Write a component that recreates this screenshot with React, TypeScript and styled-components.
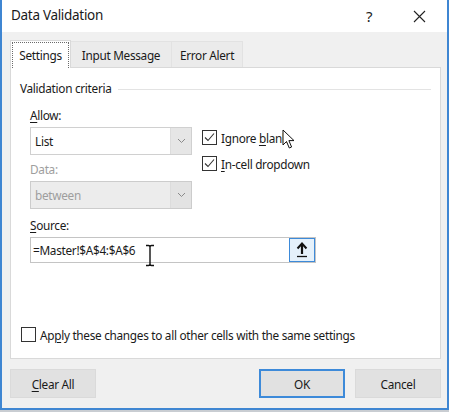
import React from 'react'
import styled, { createGlobalStyle } from 'styled-components'

const GlobalStyle = createGlobalStyle`
  html, body {
    margin: 0;
    padding: 0;
    background: #c9cdd2;
  }
  body {
    font-family: 'Noto Sans', 'Open Sans', Arial, sans-serif;
    font-size: 11.8px;
    letter-spacing: -0.3px;
    color: #1a1a1a;
  }
`

const Window = styled.div`
  width: 449px;
  height: 410px;
  box-sizing: border-box;
  border: 2px solid #3f86d2;
  border-top: none;
  background: #f0f0f0;
  display: flex;
  flex-direction: column;
  overflow: hidden;
`

const TitleBar = styled.div`
  height: 32px;
  flex: 0 0 32px;
  background: #ffffff;
  display: flex;
  align-items: center;
  padding-left: 9px;
  padding-right: 3px;
`

const Title = styled.div`
  font-size: 13.5px;
  flex: 1;
  padding-bottom: 2px;
`

const TitleButton = styled.div`
  width: 50px;
  height: 32px;
  display: flex;
  align-items: center;
  justify-content: center;
  font-size: 15px;
  color: #222;
`

const Body = styled.div`
  flex: 1;
  display: flex;
  flex-direction: column;
  padding: 8px 6px 0 8px;
`

const TabStrip = styled.div`
  display: flex;
  align-items: flex-end;
  height: 27px;
`

const Tab = styled.div<{ $active?: boolean; $width: number }>`
  width: ${p => p.$width}px;
  height: ${p => (p.$active ? 28 : 26)}px;
  box-sizing: border-box;
  padding: 1px 1px 0;
  display: flex;
  align-items: stretch;
  justify-content: center;
  background: ${p => (p.$active ? '#ffffff' : '#ebebeb')};
  border: 1px solid ${p => (p.$active ? '#d9d9d9' : '#e2e2e2')};
  border-bottom: none;
  & + & {
    border-left: none;
  }
  position: relative;
  z-index: ${p => (p.$active ? 1 : 0)};
  margin-bottom: ${p => (p.$active ? -1 : 0)}px;
`

const TabLabel = styled.span<{ $focused?: boolean }>`
  flex: 1;
  display: flex;
  align-items: center;
  justify-content: center;
  padding-bottom: 1px;
  border: 1px dotted ${p => (p.$focused ? '#6a6a6a' : 'transparent')};
  border-bottom: none;
`

const Panel = styled.div`
  height: 292px;
  box-sizing: border-box;
  background: #ffffff;
  border: 1px solid #d9d9d9;
  padding: 12px 9px 12px 9px;
  display: flex;
  flex-direction: column;
`

const GroupHeader = styled.div`
  display: flex;
  align-items: center;
  gap: 6px;
  &::after {
    content: '';
    flex: 1;
    height: 1px;
    background: #e3e3e3;
    margin-top: 2px;
  }
`

const Form = styled.div`
  padding-left: 10px;
  margin-top: 10px;
  display: grid;
  grid-template-columns: 162px 1fr;
  column-gap: 10px;
`

const Label = styled.div<{ $disabled?: boolean }>`
  color: ${p => (p.$disabled ? '#9e9e9e' : '#1a1a1a')};
  height: 18px;
  line-height: 18px;
  margin-bottom: 3px;
`

const U = styled.span`
  text-decoration: underline;
  text-underline-offset: 2px;
`

const Select = styled.div<{ $disabled?: boolean }>`
  height: 28px;
  box-sizing: border-box;
  display: flex;
  align-items: stretch;
  border: 1px solid ${p => (p.$disabled ? '#cccccc' : '#d0d0d0')};
  background: ${p => (p.$disabled ? '#ececec' : '#ffffff')};
  color: ${p => (p.$disabled ? '#9e9e9e' : '#1a1a1a')};
  margin-bottom: 5px;
`

const SelectValue = styled.div`
  flex: 1;
  display: flex;
  align-items: center;
  padding-left: 4px;
`

const SelectArrow = styled.div<{ $disabled?: boolean }>`
  width: 20px;
  display: flex;
  align-items: center;
  justify-content: center;
  background: ${p => (p.$disabled ? '#e3e3e3' : '#e6e6e6')};
  border-left: 1px solid #dcdcdc;
`

const Column = styled.div`
  display: flex;
  flex-direction: column;
`

const Checks = styled.div`
  display: flex;
  flex-direction: column;
  gap: 9px;
  padding-top: 23px;
`

const CheckRow = styled.label`
  display: flex;
  align-items: center;
  gap: 4px;
  height: 17px;
  position: relative;
`

const Box = styled.span`
  width: 15px;
  height: 15px;
  flex: 0 0 15px;
  box-sizing: border-box;
  border: 1px solid #333;
  background: #fff;
  display: inline-flex;
  align-items: center;
  justify-content: center;
`

const SourceBlock = styled.div`
  padding-left: 10px;
  padding-top: 2px;
`

const SourceField = styled.div`
  width: 286px;
  height: 26px;
  box-sizing: border-box;
  border: 1px solid #c4c4c4;
  display: flex;
  align-items: center;
  padding-left: 2px;
  position: relative;
`

const SourceText = styled.div`
  flex: 1;
`

const RefButton = styled.div`
  width: 26px;
  height: 24px;
  box-sizing: border-box;
  background: #e5f1fb;
  border: 1px solid #3d8ad9;
  display: flex;
  align-items: center;
  justify-content: center;
`

const Spacer = styled.div`
  flex: 1;
`

const ApplyRow = styled(CheckRow)`
  padding-left: 1px;
  margin-bottom: 3px;
`

const ButtonRow = styled.div`
  display: flex;
  align-items: center;
  margin-top: 10px;
`

const Button = styled.div<{ $default?: boolean }>`
  width: 86px;
  height: 29px;
  box-sizing: border-box;
  background: #e1e1e1;
  border: ${p => (p.$default ? '2px solid #3d8ad9' : '1px solid #dadada')};
  display: flex;
  align-items: center;
  justify-content: center;
  & + & {
    margin-left: 10px;
  }
`

const Overlay = styled.svg`
  position: absolute;
  pointer-events: none;
`

const Check = () => (
  <svg width="13" height="13" viewBox="0 0 13 13">
    <path d="M2 6.5 L5 9.5 L11 2.5" fill="none" stroke="#333" strokeWidth="1.1" />
  </svg>
)

const Chevron = () => (
  <svg width="9" height="6" viewBox="0 0 9 6">
    <path d="M1 1 L4.5 4.5 L8 1" fill="none" stroke="#8a8a8a" strokeWidth="1" />
  </svg>
)

const App: React.FC = () => (
  <>
    <GlobalStyle />
    <Window>
      <TitleBar>
        <Title>Data Validation</Title>
        <TitleButton>?</TitleButton>
        <TitleButton>
          <svg width="13" height="13" viewBox="0 0 13 13">
            <path d="M1 1 L12 12 M12 1 L1 12" stroke="#222" strokeWidth="1.1" />
          </svg>
        </TitleButton>
      </TitleBar>
      <Body>
        <TabStrip>
          <Tab $active $width={61}>
            <TabLabel $focused>Settings</TabLabel>
          </Tab>
          <Tab $width={101}>
            <TabLabel>Input Message</TabLabel>
          </Tab>
          <Tab $width={71}>
            <TabLabel>Error Alert</TabLabel>
          </Tab>
        </TabStrip>
        <Panel>
          <GroupHeader>Validation criteria</GroupHeader>
          <Form>
            <Column>
              <Label>
                <U>A</U>llow:
              </Label>
              <Select>
                <SelectValue>List</SelectValue>
                <SelectArrow>
                  <Chevron />
                </SelectArrow>
              </Select>
              <Label $disabled>Data:</Label>
              <Select $disabled>
                <SelectValue>between</SelectValue>
                <SelectArrow $disabled>
                  <Chevron />
                </SelectArrow>
              </Select>
            </Column>
            <Checks>
              <CheckRow>
                <Box>
                  <Check />
                </Box>
                <span>
                  Ignore <U>b</U>lank
                </span>
                <Overlay width="14" height="21" viewBox="0 0 14 21" style={{ left: 80, top: 0 }}>
                  <path
                    d="M1 1 L1 16 L4.5 12.5 L7.3 19 L9.6 18 L6.9 11.6 L12 11.6 Z"
                    fill="#fff"
                    stroke="#111"
                    strokeWidth="1"
                    strokeLinejoin="round"
                  />
                </Overlay>
              </CheckRow>
              <CheckRow>
                <Box>
                  <Check />
                </Box>
                <span>
                  <U>I</U>n-cell dropdown
                </span>
              </CheckRow>
            </Checks>
          </Form>
          <SourceBlock>
            <Label>
              <U>S</U>ource:
            </Label>
            <SourceField>
              <SourceText>=Master!$A$4:$A$6</SourceText>
              <RefButton>
                <svg width="12" height="16" viewBox="0 0 12 16">
                  <path d="M6 2 L6 12" stroke="#111" strokeWidth="2.2" />
                  <path d="M1.5 6.5 L6 1.5 L10.5 6.5" fill="none" stroke="#111" strokeWidth="2" />
                  <path d="M1 14.5 L11 14.5" stroke="#111" strokeWidth="1.3" />
                </svg>
              </RefButton>
              <Overlay width="10" height="23" viewBox="0 0 10 23" style={{ left: 114, top: 6 }}>
                <path
                  d="M1 1.5 L3.5 1.5 Q5 1.5 5 3 L5 20 Q5 21.5 3.5 21.5 L1 21.5 M9 1.5 L6.5 1.5 Q5 1.5 5 3 M5 20 Q5 21.5 6.5 21.5 L9 21.5"
                  fill="none"
                  stroke="#111"
                  strokeWidth="1.4"
                />
              </Overlay>
            </SourceField>
          </SourceBlock>
          <Spacer />
          <ApplyRow>
            <Box />
            <span>
              Ap<U>p</U>ly these changes to all other cells with the same settings
            </span>
          </ApplyRow>
        </Panel>
        <ButtonRow>
          <Button>
            <span>
              <U>C</U>lear All
            </span>
          </Button>
          <Spacer />
          <Button $default>OK</Button>
          <Button>Cancel</Button>
        </ButtonRow>
      </Body>
    </Window>
  </>
)

export default App
